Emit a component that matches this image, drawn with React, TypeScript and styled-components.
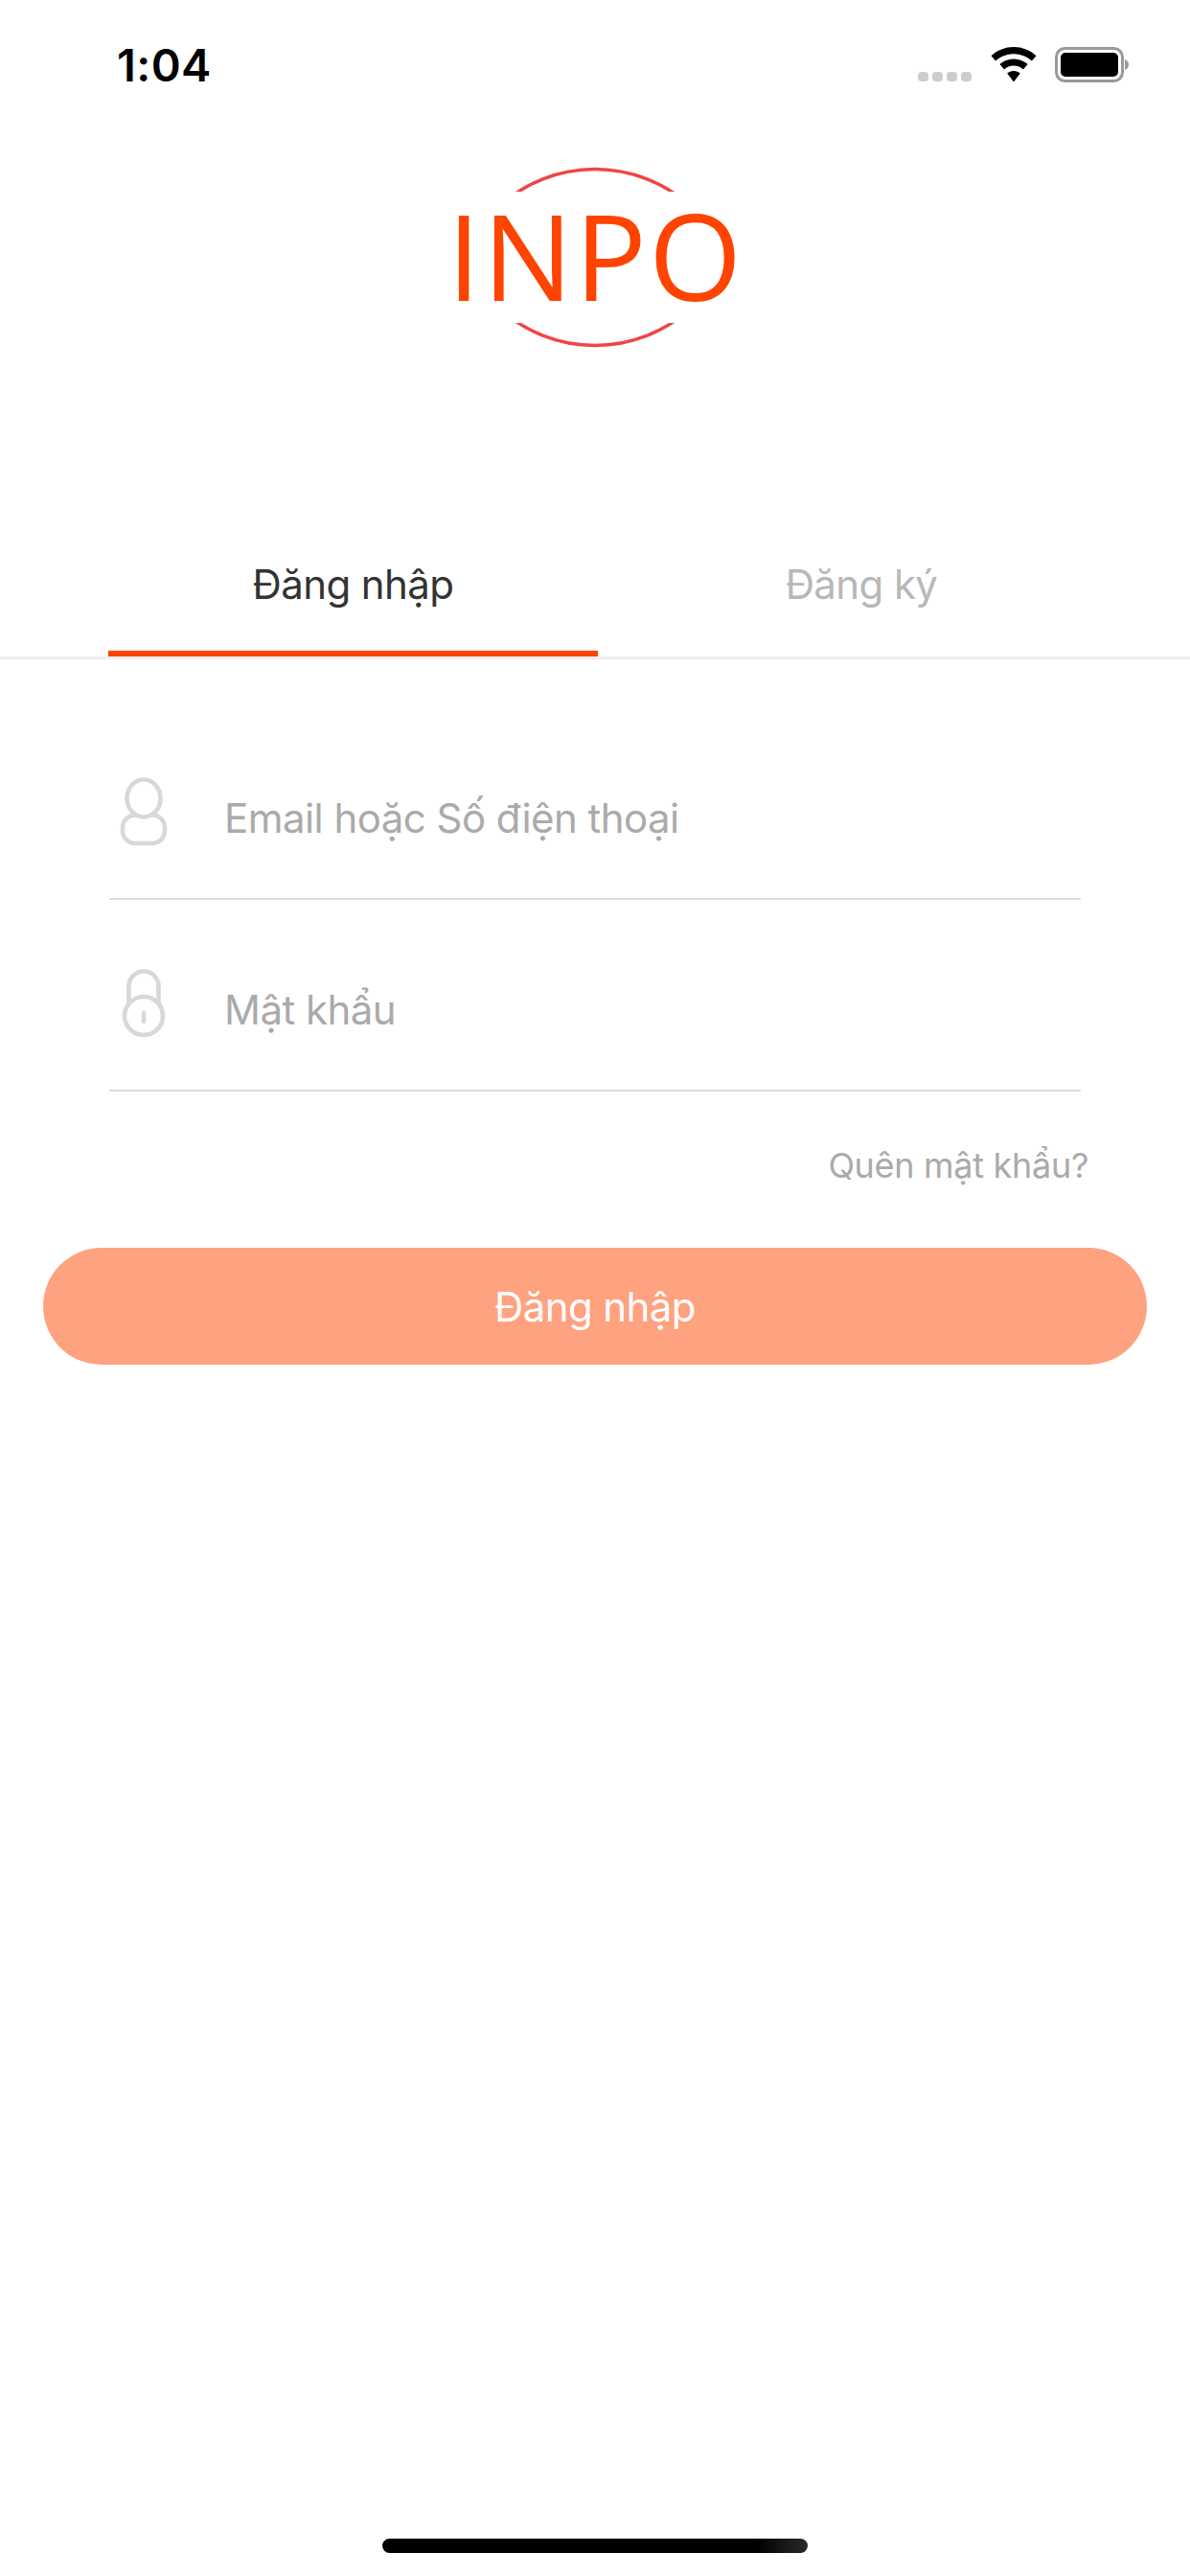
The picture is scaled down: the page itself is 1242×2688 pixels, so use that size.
import React from "react";
import styled, { createGlobalStyle } from "styled-components";

const GlobalStyle = createGlobalStyle`
  html, body {
    margin: 0;
    padding: 0;
    background: #fff;
  }
`;

const Page = styled.div`
  width: 1242px;
  height: 2688px;
  display: flex;
  flex-direction: column;
  background: #fff;
  font-family: Inter, "Noto Sans", sans-serif;
  overflow: hidden;
`;

const StatusBar = styled.div`
  height: 100px;
  box-sizing: border-box;
  padding: 49px 64px 0 122px;
  display: flex;
  align-items: flex-start;
  justify-content: space-between;
`;

const Time = styled.span`
  font-size: 47px;
  line-height: 38px;
  font-weight: 600;
  letter-spacing: 0.4px;
  color: #000;
`;

const StatusIcons = styled.div`
  display: flex;
  align-items: flex-end;
  height: 37px;
`;

const SignalDots = styled.div`
  display: flex;
  gap: 4px;
  margin-right: 20px;
  margin-bottom: 1px;
`;

const SignalDot = styled.i`
  width: 11px;
  height: 10px;
  border-radius: 4px;
  background: #cccccc;
`;

const Logo = styled.svg`
  display: block;
  width: 320px;
  height: 200px;
  margin: 70px auto 0;
`;

const Tabs = styled.div`
  margin-top: 170px;
  height: 148px;
  box-sizing: border-box;
  display: flex;
  padding-left: 113px;
  border-bottom: 3px solid #eeeeee;
`;

const Tab = styled.div<{ $active?: boolean; $width: number }>`
  width: ${(p) => p.$width}px;
  height: 145px;
  box-sizing: border-box;
  display: flex;
  align-items: center;
  justify-content: center;
  font-size: 42px;
  letter-spacing: -0.6px;
  color: ${(p) => (p.$active ? "#333333" : "#b8b8b8")};
  border-bottom: 6px solid ${(p) => (p.$active ? "#ff4400" : "transparent")};
`;

const Form = styled.div`
  margin: 51px 114px 0;
  display: flex;
  flex-direction: column;
`;

const Field = styled.div`
  height: 200px;
  box-sizing: border-box;
  display: flex;
  align-items: center;
  padding-top: 30px;
  border-bottom: 2px solid #dddddd;
`;

const FieldIcon = styled.svg`
  width: 72px;
  height: 72px;
  margin: -12px 48px 0 0;
  flex-shrink: 0;
`;

const Placeholder = styled.span`
  font-size: 42px;
  letter-spacing: -0.55px;
  color: #aaaaaa;
`;

const ForgotRow = styled.div`
  display: flex;
  justify-content: flex-end;
  margin: 55px 106px 0 0;
  font-size: 36px;
  line-height: 44px;
  letter-spacing: -0.3px;
  color: #aaaaaa;
`;

const SubmitButton = styled.div`
  margin: 64px 45px 0;
  height: 122px;
  border-radius: 61px;
  background: #ffa280;
  color: #fff;
  font-size: 42px;
  letter-spacing: -0.6px;
  display: flex;
  align-items: center;
  justify-content: center;
`;

const HomeIndicator = styled.div`
  margin: auto auto 24px;
  width: 444px;
  height: 15px;
  border-radius: 8px;
  background: linear-gradient(90deg, #000 0%, #000 88%, #2a2a2a 100%);
`;

const WifiIcon = () => (
  <svg width="48" height="37" viewBox="0 0 48 37" style={{ marginRight: 19 }}>
    <path d="M24 0C15 0 6.8 3.4 0.5 9.2l4.6 5.4C10.1 10 16.7 7.2 24 7.2s13.9 2.8 18.9 7.4l4.6-5.4C41.2 3.4 33 0 24 0z" fill="#000" />
    <path d="M24 12.4c-5.6 0-10.8 2.2-14.6 5.7l4.7 5.4c2.6-2.4 6.1-3.9 9.9-3.9s7.3 1.5 9.9 3.9l4.7-5.4C34.8 14.6 29.6 12.4 24 12.4z" fill="#000" />
    <path d="M24 25c-2.6 0-5 1-6.8 2.6L24 36.5l6.8-8.9C29 26 26.6 25 24 25z" fill="#000" />
  </svg>
);

const BatteryIcon = () => (
  <svg width="77" height="37" viewBox="0 0 77 37">
    <rect x="1.5" y="1.5" width="69" height="34" rx="9" fill="none" stroke="#999999" strokeWidth="3" />
    <rect x="6" y="6" width="60" height="25" rx="5" fill="#000" />
    <path d="M73 13c2.4 0.6 4 2.8 4 5.5s-1.6 4.9-4 5.5z" fill="#999999" />
  </svg>
);

const UserIcon = () => (
  <FieldIcon viewBox="0 0 72 72" fill="none" stroke="#d8d8d8" strokeWidth="4.6">
    <rect x="14" y="39.5" width="44" height="29.5" rx="13" />
    <ellipse cx="36" cy="22" rx="17.5" ry="19.5" fill="#fff" />
  </FieldIcon>
);

const LockIcon = () => (
  <FieldIcon viewBox="0 0 72 72" fill="none" stroke="#d8d8d8" strokeWidth="4.6">
    <path d="M20.5 38V18a15.5 15.5 0 0 1 31 0v20" />
    <circle cx="36" cy="49" r="20" fill="#fff" />
    <path d="M36 46v9" strokeLinecap="round" />
  </FieldIcon>
);

export default function App() {
  return (
    <>
      <GlobalStyle />
      <Page>
        <StatusBar>
          <Time>1:04</Time>
          <StatusIcons>
            <SignalDots>
              <SignalDot />
              <SignalDot />
              <SignalDot />
              <SignalDot />
            </SignalDots>
            <WifiIcon />
            <BatteryIcon />
          </StatusIcons>
        </StatusBar>

        <Logo viewBox="0 0 320 200">
          <defs>
            <clipPath id="logo-top">
              <rect x="0" y="0" width="320" height="30" />
            </clipPath>
            <clipPath id="logo-bottom">
              <rect x="0" y="167" width="320" height="33" />
            </clipPath>
          </defs>
          <g clipPath="url(#logo-top)">
            <circle cx="160" cy="154.4" r="147.9" fill="none" stroke="#f04545" strokeWidth="3.4" />
          </g>
          <g clipPath="url(#logo-bottom)">
            <circle cx="160" cy="42.6" r="147.9" fill="none" stroke="#f04545" strokeWidth="3.4" />
          </g>
          <text
            x="160.5"
            y="143.5"
            textAnchor="middle"
            fontFamily="'Open Sans', 'Noto Sans', sans-serif"
            fontSize="125"
            letterSpacing="2"
            fill="#ff4400"
          >
            INPO
          </text>
        </Logo>

        <Tabs>
          <Tab $active $width={511}>Đăng nhập</Tab>
          <Tab $width={550}>Đăng ký</Tab>
        </Tabs>

        <Form>
          <Field>
            <UserIcon />
            <Placeholder>Email hoặc Số điện thoại</Placeholder>
          </Field>
          <Field>
            <LockIcon />
            <Placeholder>Mật khẩu</Placeholder>
          </Field>
        </Form>

        <ForgotRow>Quên mật khẩu?</ForgotRow>
        <SubmitButton>Đăng nhập</SubmitButton>
        <HomeIndicator />
      </Page>
    </>
  );
}
